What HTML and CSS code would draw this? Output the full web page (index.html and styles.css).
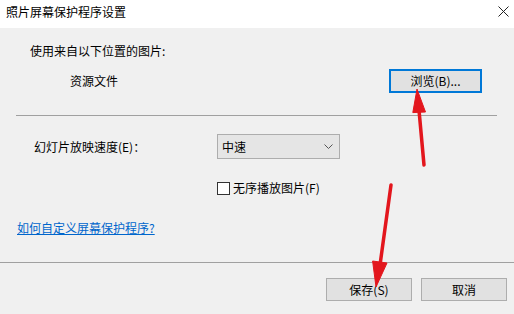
FILE: index.html
```html
<!DOCTYPE html>
<html lang="zh-CN">
<head>
  <meta charset="UTF-8">
  <meta name="viewport" content="width=device-width, initial-scale=1.0">
  <title>照片屏幕保护程序设置</title>
  <link rel="stylesheet" href="styles.css">
</head>
<body>
  <div class="dialog">

    <!-- Title bar -->
    <header class="titlebar">
      <span class="title">照片屏幕保护程序设置</span>
      <span class="close">
        <svg width="11" height="11" viewBox="0 0 11 11">
          <path d="M0.5 0.5 L10.5 10.5 M10.5 0.5 L0.5 10.5" stroke="#222" stroke-width="1" fill="none"/>
        </svg>
      </span>
    </header>

    <main class="content">
      <section class="source">
        <p class="caption">使用来自以下位置的图片:</p>
        <div class="source-row">
          <span class="source-name">资源文件</span>
          <button class="btn btn-focus">浏览(B)...</button>
        </div>
      </section>

      <hr class="divider">

      <div class="speed-row">
        <label class="speed-label">幻灯片放映速度(E)：</label>
        <div class="combo">
          <span>中速</span>
          <svg width="9" height="6" viewBox="0 0 9 6">
            <path d="M0.5 0.5 L4.5 4.5 L8.5 0.5" stroke="#555" stroke-width="1" fill="none"/>
          </svg>
        </div>
      </div>

      <label class="check-row">
        <span class="checkbox"></span>
        <span>无序播放图片(F)</span>
      </label>

      <a href="#" class="help-link">如何自定义屏幕保护程序?</a>
    </main>

    <footer class="actions">
      <button class="btn">保存(S)</button>
      <button class="btn">取消</button>
    </footer>

    <!-- Red annotation arrows drawn over the dialog -->
    <svg class="arrows" width="514" height="314" viewBox="0 0 514 314">
      <g fill="#e3161d" stroke="#e3161d">
        <line x1="424" y1="165" x2="418.8" y2="108" stroke-width="3.5" stroke-linecap="round"/>
        <polygon points="417,89 425.5,112 412.8,112.6" stroke-width="1"/>
        <line x1="391" y1="185" x2="380" y2="265" stroke-width="3.5" stroke-linecap="round"/>
        <polygon points="376,287 387,263 372.6,261" stroke-width="1"/>
      </g>
    </svg>
  </div>
</body>
</html>
```

FILE: styles.css
```css
body {
  margin: 0;
  font-family: "Noto Sans CJK SC", "Microsoft YaHei", sans-serif;
  font-size: 12px;
  color: #000;
  background: #f0f0f0;
}

.dialog {
  position: relative;
  width: 514px;
  height: 314px;
  display: flex;
  flex-direction: column;
  background: #f0f0f0;
  overflow: hidden;
}

.titlebar {
  height: 28px;
  background: #fff;
  display: flex;
  justify-content: space-between;
  align-items: flex-start;
  box-sizing: border-box;
  padding: 4px 5px 0 6px;
  line-height: 16px;
}

.close {
  display: flex;
  margin-top: 2px;
}

.content {
  flex: 1;
  display: flex;
  flex-direction: column;
  align-items: flex-start;
}

.caption {
  margin: 15px 0 0 30px;
  line-height: 16px;
}

.source-row {
  display: flex;
  align-items: center;
  margin-top: 10px;
  width: 482px;
}

.source-name {
  margin-left: 70px;
  line-height: 16px;
}

.btn {
  font-family: inherit;
  font-size: 12px;
  color: #000;
  background: #e1e1e1;
  border: 1px solid #adadad;
  width: 86px;
  height: 24px;
  padding: 0;
  line-height: 20px;
}

.btn-focus {
  margin-left: auto;
  width: 93px;
  border: 2px solid #0078d7;
}

.divider {
  margin: 22px 0 0 16px;
  width: 481px;
  border: none;
  border-top: 1px solid #a0a0a0;
  height: 0;
}

.speed-row {
  display: flex;
  align-items: center;
  margin-top: 18px;
}

.speed-label {
  margin-left: 34px;
  width: 183px;
  line-height: 16px;
}

.combo {
  width: 123px;
  height: 25px;
  box-sizing: border-box;
  border: 1px solid #adadad;
  background: #e5e5e5;
  display: flex;
  align-items: center;
  justify-content: space-between;
  padding: 0 6px 0 4px;
  line-height: 16px;
}

.check-row {
  display: flex;
  align-items: center;
  margin: 21px 0 0 217px;
  line-height: 16px;
}

.checkbox {
  width: 13px;
  height: 13px;
  box-sizing: border-box;
  border: 1px solid #333;
  background: #fff;
  margin-right: 3px;
}

.help-link {
  margin: 24px 0 0 17px;
  line-height: 16px;
  color: #0066cc;
  text-decoration: underline;
}

.actions {
  height: 52px;
  box-sizing: border-box;
  border-top: 1px solid #a0a0a0;
  display: flex;
  justify-content: flex-end;
  align-items: flex-start;
  gap: 9px;
  padding: 15px 7px 0 0;
}

.actions .btn {
  height: 23px;
}

.arrows {
  position: absolute;
  top: 0;
  left: 0;
  pointer-events: none;
}
```
